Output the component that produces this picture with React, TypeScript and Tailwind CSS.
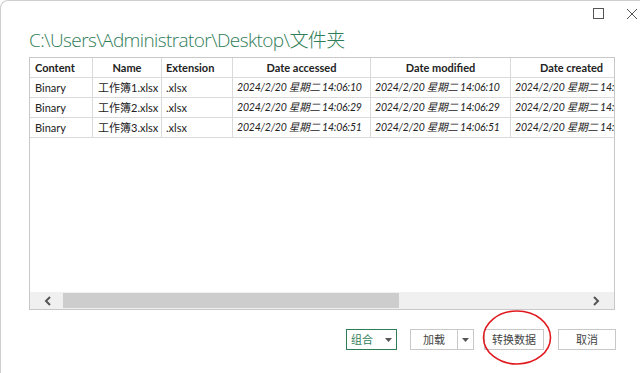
const cols = [
  { label: 'Content', w: 'w-[63px]', align: 'text-left pl-[5px]' },
  { label: 'Name', w: 'w-[69px]', align: 'text-center' },
  { label: 'Extension', w: 'w-[71px]', align: 'text-left pl-[4px]' },
  { label: 'Date accessed', w: 'w-[138px]', align: 'text-center' },
  { label: 'Date modified', w: 'w-[140px]', align: 'text-center' },
  { label: 'Date created', w: 'w-[122px]', align: 'text-center' },
];

const rows = [
  { name: '工作簿1.xlsx', t: '14:06:10' },
  { name: '工作簿2.xlsx', t: '14:06:29' },
  { name: '工作簿3.xlsx', t: '14:06:51' },
];

const cell = 'h-[20px] border-r border-b border-[#dadada] whitespace-nowrap overflow-hidden leading-[19px] shrink-0';
const date = 'italic text-[10.5px] tracking-[-0.2px]';

export default function App() {
  return (
    <div className="w-[640px] h-[373px] bg-white overflow-hidden font-['Noto_Sans_CJK_SC',sans-serif]">
      <div className="w-[660px] h-[380px] border-l border-t border-[#cfcfcf] rounded-tl-[8px] relative">
        {/* window controls */}
        <div className="flex items-center h-[25px] pl-[592px] gap-[22px]">
          <div className="w-[11px] h-[11px] border border-[#555]" />
          <svg width="12" height="12" viewBox="0 0 12 12">
            <path d="M1 1 L11 11 M11 1 L1 11" stroke="#555" strokeWidth="1" />
          </svg>
        </div>

        <div className="pl-[28px] h-[31px] text-[19px] leading-[28px] text-[#2f7d57] font-light font-['Open_Sans','Noto_Sans_CJK_SC',sans-serif] tracking-[-0.6px]">
          C:\Users\Administrator\Desktop\文件夹
        </div>

        <div className="ml-[28px] w-[586px] h-[253px] border border-[#c8c8c8] flex flex-col">
          <div className="flex-1 overflow-hidden text-[11px] text-[#222] font-['Lato','Noto_Sans_CJK_SC',sans-serif]">
            <div className="flex w-[700px]">
              {cols.map((c) => (
                <div key={c.label} className={`${cell} ${c.w} ${c.align} font-bold`}>{c.label}</div>
              ))}
            </div>
            {rows.map((r) => (
              <div key={r.name} className="flex w-[700px]">
                <div className={`${cell} w-[63px] pl-[5px]`}>Binary</div>
                <div className={`${cell} w-[69px] pl-[5px]`}>{r.name}</div>
                <div className={`${cell} w-[71px] pl-[4px]`}>.xlsx</div>
                <div className={`${cell} w-[138px] pl-[4px] ${date}`}>2024/2/20 星期二 {r.t}</div>
                <div className={`${cell} w-[140px] pl-[4px] ${date}`}>2024/2/20 星期二 {r.t}</div>
                <div className={`${cell} w-[122px] pl-[4px] ${date}`}>2024/2/20 星期二 {r.t}</div>
              </div>
            ))}
          </div>
          <div className="h-[17px] bg-[#f0f0f0] flex items-center">
            <div className="w-[33px] flex justify-center pl-[2px]">
              <svg width="8" height="10" viewBox="0 0 8 10">
                <path d="M6 1 L2 5 L6 9" stroke="#555" strokeWidth="2" fill="none" />
              </svg>
            </div>
            <div className="w-[336px] h-[15px] bg-[#cdcdcd]" />
            <div className="flex-1" />
            <div className="w-[33px] flex justify-center pr-[4px]">
              <svg width="8" height="10" viewBox="0 0 8 10">
                <path d="M2 1 L6 5 L2 9" stroke="#555" strokeWidth="2" fill="none" />
              </svg>
            </div>
          </div>
        </div>

        <div className="flex items-center mt-[19px] pl-[345px] text-[11px] text-[#444]">
          <div className="w-[51px] h-[21px] border border-[#2f7d57] flex items-center justify-center gap-[12px] text-[#2f7d57]">
            <span>组合</span>
            <svg width="7" height="4" viewBox="0 0 7 4"><path d="M0 0 H7 L3.5 4 Z" fill="#555" /></svg>
          </div>
          <div className="ml-[13px] w-[64px] h-[21px] border border-[#c8c8c8] flex">
            <div className="w-[47px] border-r border-[#c8c8c8] flex items-center justify-center">加载</div>
            <div className="flex-1 flex items-center justify-center">
              <svg width="7" height="4" viewBox="0 0 7 4"><path d="M0 0 H7 L3.5 4 Z" fill="#555" /></svg>
            </div>
          </div>
          <div className="ml-[10px] w-[60px] h-[21px] border border-[#c8c8c8] flex items-center justify-center">转换数据</div>
          <div className="ml-[14px] w-[58px] h-[21px] border border-[#c8c8c8] flex items-center justify-center">取消</div>
        </div>

        {/* red annotation circle */}
        <svg className="absolute left-[481px] top-[308px]" width="70" height="57" viewBox="0 0 70 57">
          <ellipse cx="35" cy="28.5" rx="33.5" ry="26.5" stroke="#e0191f" strokeWidth="1.6" fill="none" />
        </svg>
      </div>
    </div>
  );
}
